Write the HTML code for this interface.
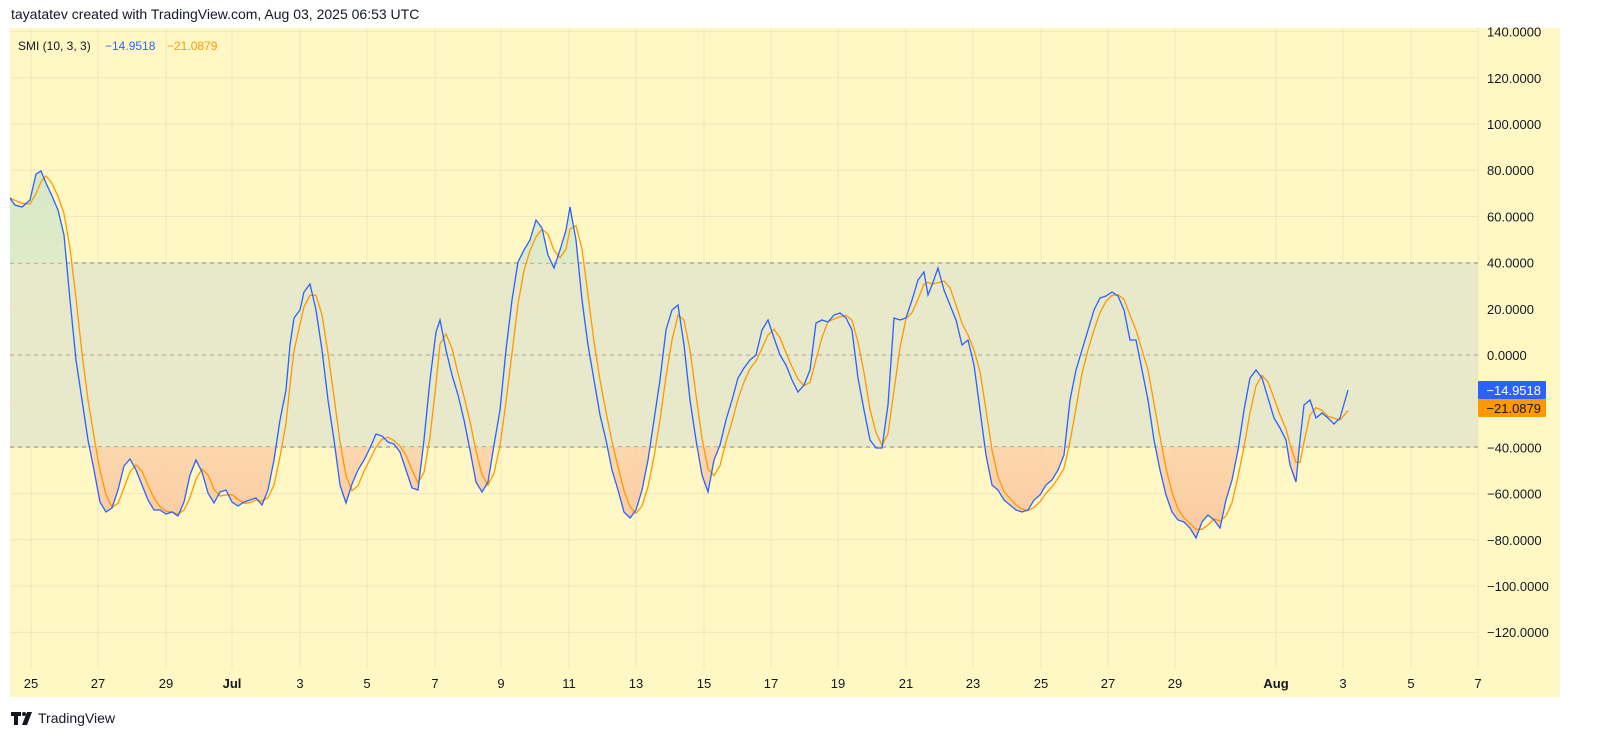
<!DOCTYPE html>
<html><head><meta charset="utf-8"><style>
body{margin:0;width:1600px;height:751px;background:#fff;font-family:"Liberation Sans",sans-serif;position:relative;overflow:hidden}
.t{position:absolute;white-space:nowrap}
</style></head><body>
<div class="t" style="left:11px;top:6px;font-size:14px;color:#131722">tayatatev created with TradingView.com, Aug 03, 2025 06:53 UTC</div>
<svg id="s" width="1600" height="751" style="position:absolute;left:0;top:0">
<defs>
<linearGradient id="og" x1="0" y1="0" x2="0" y2="1"><stop offset="0" stop-color="#fde6c0" stop-opacity=".3"/><stop offset="1" stop-color="#fbc9a0"/></linearGradient>
<linearGradient id="gg" x1="0" y1="1" x2="0" y2="0"><stop offset="0" stop-color="#e3ecc8" stop-opacity=".4"/><stop offset="1" stop-color="#d6e8c8"/></linearGradient>
<clipPath id="cb"><rect x="0" y="447" width="1478" height="230"/></clipPath>
<clipPath id="ca"><rect x="0" y="28" width="1478" height="235"/></clipPath>
</defs>
<rect x="10" y="28" width="1550" height="669" fill="#fff8c5"/>
<rect x="10" y="263" width="1468" height="184" fill="#e8e8cb"/>
<g id="grid" stroke="#ece6c0" stroke-width="1"></g>
<line x1="10" x2="1478" y1="263" y2="263" stroke="#8a8a80" stroke-dasharray="4,4"/>
<line x1="10" x2="1478" y1="355" y2="355" stroke="#a8a89a" stroke-dasharray="4,4"/>
<line x1="10" x2="1478" y1="447" y2="447" stroke="#8a8a80" stroke-dasharray="4,4"/>
<path id="fb" clip-path="url(#cb)" fill="url(#og)"/>
<path id="fa" clip-path="url(#ca)" fill="url(#gg)"/>
<polyline id="or" fill="none" stroke="#ff9800" stroke-width="1.3"/>
<polyline id="bl" fill="none" stroke="#2962ff" stroke-width="1.3"/>
<g id="yl" font-size="13" fill="#131722"></g>
<g id="xl" font-size="13" fill="#131722" text-anchor="middle"></g>
<rect x="1478" y="381" width="68" height="18" fill="#2962ff" rx="1"/>
<text x="1541" y="395" font-size="13" fill="#fff" text-anchor="end">−14.9518</text>
<rect x="1478" y="399" width="68" height="18" fill="#ff9800" rx="1"/>
<text x="1541" y="413" font-size="13" fill="#131722" text-anchor="end">−21.0879</text>
<text x="18" y="50" font-size="12" fill="#131722">SMI (10, 3, 3)</text>
<text x="105" y="50" font-size="12" fill="#2962ff">−14.9518</text>
<text x="167" y="50" font-size="12" fill="#ff9800">−21.0879</text>
<g fill="#131722"><path d="M11 712h10v4h-3v9h-4v-9h-3z"/><circle cx="24" cy="714" r="2"/><path d="M27 712h5l-5 13h-5z"/></g>
<text x="38" y="723" font-size="14" fill="#131722">TradingView</text>
</svg>
<script>
var B=[[10,198],[15,205],[22,207],[30,200],[36,174],[41,171],[46,183],[52,196],[58,210],[64,235],[70,300],[76,360],[82,400],[88,440],[94,470],[100,502],[106,512],[112,508],[118,490],[124,466],[130,459],[136,470],[142,485],[148,500],[154,510],[160,510],[166,514],[172,512],[178,516],[184,502],[190,475],[196,460],[202,472],[208,493],[214,503],[220,492],[226,490],[232,502],[238,506],[244,502],[250,500],[256,498],[262,505],[268,490],[274,460],[280,420],[286,390],[290,345],[294,318],[300,310],[304,292],[310,284],[316,310],[322,350],[328,400],[334,440],[340,485],[346,503],[352,484],[358,470],[364,460],[370,448],[376,434],[382,436],[388,442],[394,444],[400,452],[406,470],[412,488],[418,490],[424,440],[430,380],[436,332],[440,320],[446,350],[452,375],[458,395],[464,420],[470,450],[476,482],[482,492],[488,482],[494,445],[500,410],[506,350],[512,300],[518,262],[524,250],[530,240],[536,220],[542,228],[548,255],[554,268],[560,250],[566,230],[570,207],[576,240],[582,300],[588,345],[594,380],[600,415],[606,440],[612,470],[618,490],[624,512],[630,518],[636,510],[642,490],[648,460],[654,420],[660,380],[666,330],[672,310],[678,305],[684,345],[690,400],[696,440],[702,475],[708,492],[714,460],[720,445],[726,420],[732,400],[738,378],[744,368],[750,360],[756,355],[762,330],[768,320],[774,338],[780,355],[786,365],[792,380],[798,392],[804,385],[810,370],[816,323],[822,320],[828,322],[834,315],[840,313],[846,318],[852,330],[858,378],[864,410],[870,440],[876,448],[882,448],[888,405],[894,318],[900,320],[906,318],[912,300],[918,280],[924,272],[928,295],[932,285],[938,268],[944,290],[950,305],[956,320],[962,345],[968,340],[974,365],[980,410],[986,455],[992,485],[998,490],[1004,500],[1010,505],[1016,510],[1022,512],[1028,510],[1034,500],[1040,495],[1046,485],[1052,480],[1058,470],[1064,455],[1070,400],[1076,370],[1082,350],[1088,330],[1094,310],[1100,298],[1106,296],[1112,292],[1118,296],[1124,310],[1130,340],[1136,340],[1142,370],[1148,400],[1154,440],[1160,470],[1166,495],[1172,512],[1178,520],[1184,522],[1190,528],[1196,538],[1202,522],[1208,515],[1214,520],[1220,528],[1226,500],[1232,480],[1238,450],[1244,410],[1250,378],[1256,370],[1262,378],[1268,398],[1274,418],[1280,428],[1286,440],[1290,465],[1296,482],[1300,440],[1304,405],[1310,400],[1316,418],[1322,413],[1328,418],[1334,424],[1340,418],[1348,390]];
var O=[];for(var i=0;i<B.length;i++){var s=0,n=0;for(var k=0;k<3;k++){var j=i-k;if(j<0)j=0;s+=B[j][1];n++;}O.push([B[i][0],s/n]);}
function pl(a){return a.map(function(p){return p[0]+','+p[1].toFixed(1)}).join(' ')}
document.getElementById('bl').setAttribute('points',pl(B));
document.getElementById('or').setAttribute('points',pl(O));
var l=pl(B);
document.getElementById('fb').setAttribute('d','M10,447 L'+l.replace(/ /g,' L')+' L1348,447 Z');
document.getElementById('fa').setAttribute('d','M10,263 L'+l.replace(/ /g,' L')+' L1348,263 Z');
var ns='http://www.w3.org/2000/svg',g=document.getElementById('grid'),yl=document.getElementById('yl'),xl=document.getElementById('xl');
for(var v=140;v>=-120;v-=20){var y=355-v*2.31;var L=document.createElementNS(ns,'line');L.setAttribute('x1',10);L.setAttribute('x2',1478);L.setAttribute('y1',y);L.setAttribute('y2',y);g.appendChild(L);
var t=document.createElementNS(ns,'text');t.setAttribute('x',1487);t.setAttribute('y',y+5);t.textContent=(v<0?'−':'')+Math.abs(v).toFixed(4);yl.appendChild(t);}
var X=[[31,'25'],[98,'27'],[166,'29'],[232,'Jul'],[300,'3'],[367,'5'],[435,'7'],[501,'9'],[569,'11'],[636,'13'],[704,'15'],[771,'17'],[838,'19'],[906,'21'],[973,'23'],[1041,'25'],[1108,'27'],[1175,'29'],[1276,'Aug'],[1343,'3'],[1411,'5'],[1478,'7']];
X.forEach(function(p){var L=document.createElementNS(ns,'line');L.setAttribute('x1',p[0]);L.setAttribute('x2',p[0]);L.setAttribute('y1',28);L.setAttribute('y2',668);g.appendChild(L);
var t=document.createElementNS(ns,'text');t.setAttribute('x',p[0]);t.setAttribute('y',688);t.textContent=p[1];if(p[1]=='Jul'||p[1]=='Aug')t.setAttribute('font-weight','bold');xl.appendChild(t);});
</script>
</body></html>
